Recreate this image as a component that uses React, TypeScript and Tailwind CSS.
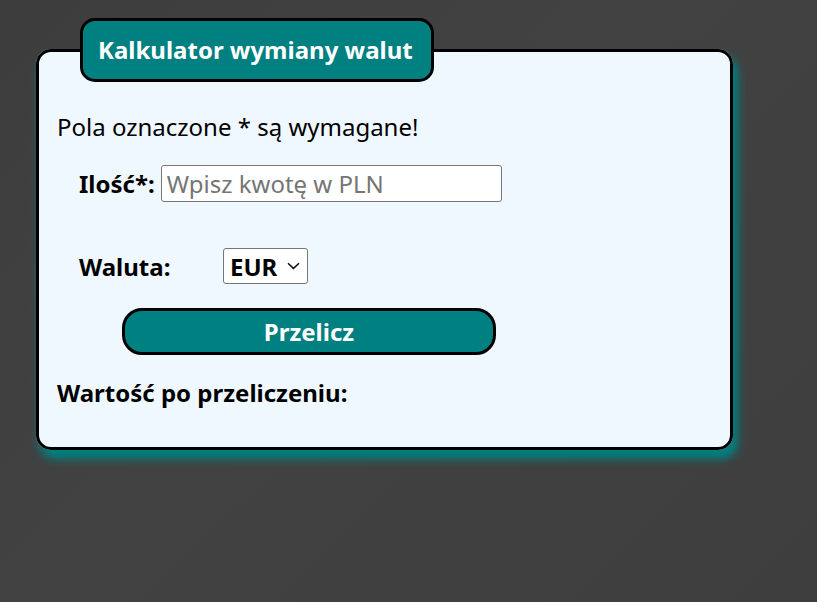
import React from "react";

export default function App() {
  return (
    <div
      className="min-h-[602px] w-full bg-[#404040] bg-[linear-gradient(135deg,#3d3d3d_0%,#424242_45%,#404040_70%,#3e3e3e_100%)] pl-[36px] pt-[18px]"
      style={{ fontFamily: '"Noto Sans", "Open Sans", sans-serif' }}
    >
      <fieldset className="m-0 w-[697px] rounded-[15px] border-[3px] border-black bg-[#f0f8ff] px-[18px] pb-[38px] shadow-[4px_8px_9px_1px_#008080]">
        <legend className="ml-[23px] rounded-[15px] border-[3px] border-black bg-[#008080] pl-[15px] pr-[18px] py-[13px] text-[24px] font-bold leading-[32px] text-white">
          Kalkulator wymiany walut
        </legend>
        <p className="mt-[28px] text-[24px] leading-[33px] text-black">
          Pola oznaczone * są wymagane!
        </p>
        <div className="ml-[22px] mt-[22px] flex items-center">
          <label className="text-[24px] font-bold leading-[33px] text-black">Ilość*:</label>
          <input
            type="text"
            placeholder="Wpisz kwotę w PLN"
            className="ml-[6px] h-[37px] w-[341px] rounded-[3px] border border-[#767676] bg-white px-[5px] text-[24px] text-black placeholder:text-[#757575]"
          />
        </div>
        <div className="ml-[22px] mt-[46px] flex items-center">
          <label className="w-[144px] text-[24px] font-bold leading-[33px] text-black">Waluta:</label>
          <div className="relative">
            <select className="block h-[36px] w-[85px] appearance-none rounded-[3px] border border-[#767676] bg-white pl-[6px] text-[24px] font-bold leading-[33px] text-black">
              <option>EUR</option>
              <option>USD</option>
              <option>GBP</option>
            </select>
            <svg
              className="pointer-events-none absolute left-[64px] top-[14px]"
              width="13"
              height="8"
              viewBox="0 0 13 8"
              fill="none"
            >
              <path d="M1 1.2 L6.5 6.4 L12 1.2" stroke="#111" strokeWidth="1.5" />
            </svg>
          </div>
        </div>
        <button className="ml-[65px] mt-[24px] block h-[47px] w-[374px] rounded-[20px] border-[3px] border-black bg-[#008080] text-[24px] font-bold leading-[33px] text-white">
          Przelicz
        </button>
        <p className="mt-[21px] text-[24px] font-bold leading-[33px] text-black">
          Wartość po przeliczeniu:
        </p>
      </fieldset>
    </div>
  );
}
